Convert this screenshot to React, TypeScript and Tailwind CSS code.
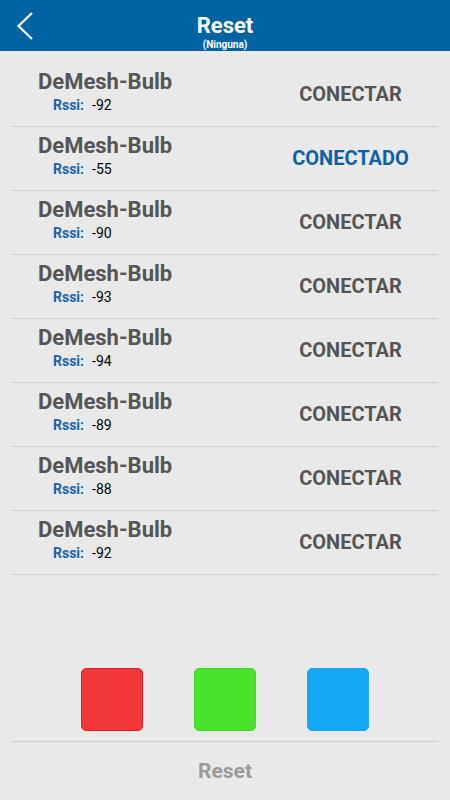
const devices = [
  { rssi: -92, connected: false },
  { rssi: -55, connected: true },
  { rssi: -90, connected: false },
  { rssi: -93, connected: false },
  { rssi: -94, connected: false },
  { rssi: -89, connected: false },
  { rssi: -88, connected: false },
  { rssi: -92, connected: false },
];

function Header() {
  return (
    <header className="relative h-[51px] bg-[#0064a3] text-white">
      <button className="absolute left-[14px] top-[10px] h-[32px] w-[24px]">
        <svg width="24" height="32" viewBox="0 0 24 32" fill="none">
          <path d="M18 3 L4.5 16 L18 29" stroke="white" strokeWidth="2.2" />
        </svg>
      </button>
      <div className="flex flex-col items-center pt-[13px]">
        <h1 className="text-[22px] font-bold leading-[26px]">Reset</h1>
        <p className="text-[10px] font-bold leading-[12px]">(Ninguna)</p>
      </div>
    </header>
  );
}

function DeviceRow({ rssi, connected }: { rssi: number; connected: boolean }) {
  return (
    <li className="flex h-[64px] items-start border-b border-[#cdcdcd]">
      <div className="flex-1 pl-[26px] pt-[5px]">
        <p className="text-[22px] font-bold leading-[28px] text-[#555555]">DeMesh-Bulb</p>
        <p className="flex gap-[8px] pl-[15px] text-[14px] leading-[18px]">
          <span className="font-bold text-[#1565a8]">Rssi:</span>
          <span className="text-black">{rssi}</span>
        </p>
      </div>
      <button
        className={`flex h-full w-[175px] items-center justify-center pb-[1px] text-[20px] font-bold ${
          connected ? "text-[#0a62a6]" : "text-[#555555]"
        }`}
      >
        {connected ? "CONECTADO" : "CONECTAR"}
      </button>
    </li>
  );
}

export default function App() {
  return (
    <div className="flex h-[800px] w-[450px] flex-col bg-[#e9e9e9] font-['Roboto',sans-serif]">
      <Header />
      <ul className="mx-[12px] mt-[12px]">
        {devices.map((d, i) => (
          <DeviceRow key={i} rssi={d.rssi} connected={d.connected} />
        ))}
      </ul>

      <div className="mt-[93px] flex justify-center gap-[51px]">
        <div className="h-[63px] w-[62px] rounded-[5px] border border-[#e71d1d] bg-[#f23838]" />
        <div className="h-[63px] w-[62px] rounded-[5px] border border-[#3cdc1e] bg-[#48e22c]" />
        <div className="h-[63px] w-[62px] rounded-[5px] border border-[#1ba6ee] bg-[#12a8f4]" />
      </div>

      <div className="mx-[12px] mt-[10px] border-t border-[#cdcdcd]">
        <button className="flex h-[59px] w-full items-center justify-center text-[21px] font-bold text-[#9a9a9a]">
          Reset
        </button>
      </div>
    </div>
  );
}
